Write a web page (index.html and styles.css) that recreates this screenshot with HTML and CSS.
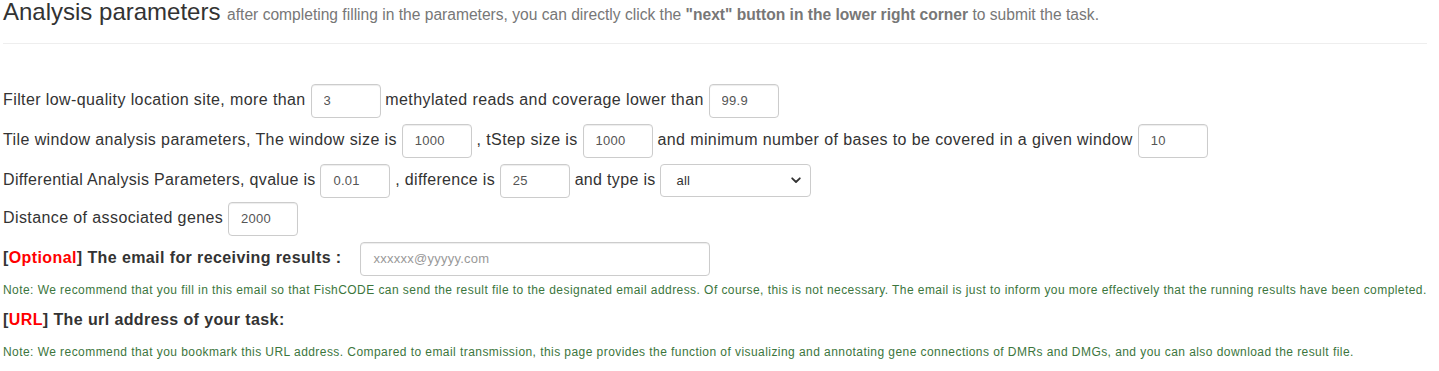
FILE: index.html
```html
<!DOCTYPE html>
<html lang="en">
<head>
<meta charset="utf-8">
<title>Analysis parameters</title>
<link rel="stylesheet" href="styles.css">
</head>
<body>
<div class="page">
  <h3 class="title">Analysis parameters <small class="subtitle">after completing filling in the parameters, you can directly click the <b>"next" button in the lower right corner</b> to submit the task.</small></h3>
  <hr class="divider">

  <div class="form">
    <div class="row">Filter low-quality location site, more than <input class="field" type="text" value="3"> methylated reads and coverage lower than <input class="field" type="text" value="99.9"></div>
    <div class="row">Tile window analysis parameters, The window size is <input class="field" type="text" value="1000"> , tStep size is <input class="field" type="text" value="1000"> and minimum number of bases to be covered in a given window <input class="field" type="text" value="10"></div>
    <div class="row row-tight">Differential Analysis Parameters, qvalue is <input class="field" type="text" value="0.01"> , difference is <input class="field" type="text" value="25"> and type is <span class="select-wrap"><select class="select"><option>all</option><option>hyper</option><option>hypo</option></select><svg class="chevron" width="10" height="7" viewBox="0 0 10 7"><path d="M1.2 1.3 L5 5 L8.8 1.3" fill="none" stroke="#333" stroke-width="1.8" stroke-linecap="round" stroke-linejoin="round"/></svg></span></div>
    <div class="row">Distance of associated genes <input class="field" type="text" value="2000"></div>
    <div class="row row-email"><span class="label">[<span class="red">Optional</span>] The email for receiving results :</span> <input class="field email" type="text" placeholder="xxxxxx@yyyyy.com"></div>
    <p class="note">Note: We recommend that you fill in this email so that FishCODE can send the result file to the designated email address. Of course, this is not necessary. The email is just to inform you more effectively that the running results have been completed.</p>
    <div class="label url-label">[<span class="red">URL</span>] The url address of your task:</div>
    <p class="note note-2">Note: We recommend that you bookmark this URL address. Compared to email transmission, this page provides the function of visualizing and annotating gene connections of DMRs and DMGs, and you can also download the result file.</p>
  </div>
</div>
</body>
</html>
```

FILE: styles.css
```css
html, body {
  margin: 0;
  padding: 0;
  background: #fff;
}
body {
  font-family: "Liberation Sans", Arial, Helvetica, sans-serif;
  color: #333;
  font-size: 16px;
}
.page {
  padding: 0 12px 0 3px;
}
.title {
  margin: 0;
  height: 24px;
  font-size: 24px;
  line-height: 24px;
  font-weight: normal;
  color: #333;
  white-space: nowrap;
}
.subtitle {
  font-size: 15.6px;
  line-height: 24px;
  color: #777;
  font-weight: normal;
}
.subtitle b {
  font-weight: bold;
}
.divider {
  margin: 19px 0 0 0;
  border: 0;
  border-top: 1px solid #eee;
  height: 0;
}
.form {
  padding-top: 39px;
}
.row {
  display: block;
  height: 34px;
  line-height: 34px;
  margin-bottom: 6px;
  white-space: nowrap;
  letter-spacing: 0.4px;
}
.row-tight {
  margin-bottom: 4px;
  letter-spacing: 0.33px;
}
.field {
  box-sizing: border-box;
  width: 70px;
  height: 34px;
  padding: 6px 12px;
  border: 1px solid #ccc;
  border-radius: 4px;
  font-family: "Liberation Sans", Arial, sans-serif;
  font-size: 13px;
  letter-spacing: 0.25px;
  color: #555;
  background: #fff;
  vertical-align: middle;
  box-shadow: inset 0 1px 1px rgba(0,0,0,0.075);
  outline: none;
}
.field::placeholder {
  color: #999;
}
.email {
  width: 350px;
  margin-left: 14px;
}
.select-wrap {
  position: relative;
  display: inline-block;
  vertical-align: middle;
  height: 33px;
}
.select {
  box-sizing: border-box;
  width: 151px;
  height: 33px;
  padding: 4px 12px 4px 15px;
  border: 1px solid #ccc;
  border-radius: 4px;
  font-family: "Liberation Sans", Arial, sans-serif;
  font-size: 13px;
  letter-spacing: 0.25px;
  color: #333;
  background: #fff;
  -webkit-appearance: none;
  appearance: none;
  display: block;
  outline: none;
}
.chevron {
  position: absolute;
  right: 10px;
  top: 13px;
  pointer-events: none;
}
.label {
  font-weight: bold;
  letter-spacing: 0.4px;
}
.red {
  color: #f00;
  font-weight: bold;
}
.note {
  margin: 7px 0 0 0;
  font-size: 12px;
  line-height: 17px;
  letter-spacing: 0.44px;
  color: #3c763d;
  white-space: nowrap;
}
.url-label {
  margin-top: 11px;
  line-height: 20px;
}
.note-2 {
  margin-top: 14px;
}
```
